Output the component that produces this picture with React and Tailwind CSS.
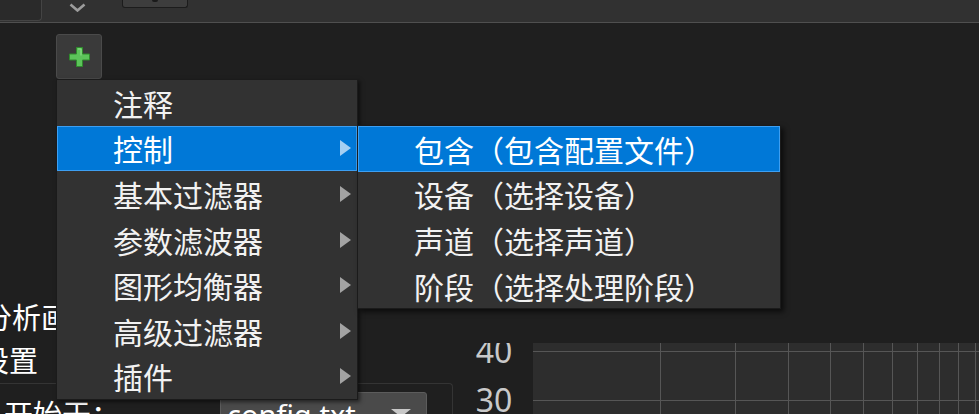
import React from "react";

const mainItems = [
    { label: "注释", sub: false },
    { label: "控制", sub: true, active: true },
    { label: "基本过滤器", sub: true },
    { label: "参数滤波器", sub: true },
    { label: "图形均衡器", sub: true },
    { label: "高级过滤器", sub: true },
    { label: "插件", sub: true },
];

const subItems = [
    { label: "包含（包含配置文件）", active: true },
    { label: "设备（选择设备）" },
    { label: "声道（选择声道）" },
    { label: "阶段（选择处理阶段）" },
];

const gridX = [127, 202, 255, 297, 330, 359, 384, 406, 425, 442];

const Arrow = ({ active }) => (
    <svg width="11" height="16" viewBox="0 0 11 16" className="shrink-0">
        <path d="M0 0 L11 8 L0 16 Z" fill={active ? "#a6cff2" : "#a3a3a3"} />
    </svg>
);

function MenuRow({ label, sub, active }) {
    return (
        <div
            className={`flex items-center h-[45.6px] border pl-[55px] pr-[5px] ${
                active ? "bg-[#0078d7] border-[#3d9ff2] text-white" : "border-transparent text-[#f2f2f2]"
            }`}
        >
            <span className="flex-1 text-[30px] leading-none whitespace-nowrap">{label}</span>
            {sub && <Arrow active={active} />}
        </div>
    );
}

export default function App() {
    return (
        <div
            className="relative w-[979px] h-[414px] overflow-hidden bg-[#1f1f1f]"
            style={{ fontFamily: '"Noto Sans", "Noto Sans CJK SC", sans-serif' }}
        >
            {/* top toolbar strip */}
            <div className="flex h-[23px] bg-[#313131] border-b border-[#4f4f4f]">
                <div className="w-[42px] h-[21px] bg-[#2a2a2a] border-r border-b border-[#444] rounded-br-[4px]" />
                <div className="ml-[27px] mt-[3px]">
                    <svg width="17" height="9" viewBox="0 0 17 9">
                        <path d="M1.5 1.5 L8.5 7.5 L15.5 1.5" stroke="#9c9c9c" strokeWidth="2.6" fill="none" />
                    </svg>
                </div>
                <div className="ml-[36px] w-[66px] h-[8px] bg-[#3d3d3d] border border-t-0 border-[#1c1c1c] rounded-b-[3px] flex justify-center">
                    <div className="w-[6px] h-[2px] bg-[#1a1a1a] rounded-b" />
                </div>
            </div>

            {/* add button */}
            <div className="pt-[11px] pl-[56px]">
                <div className="w-[46px] h-[45px] bg-[#3a3a3a] border border-[#4a4a4a] rounded-[3px] flex items-center justify-center">
                    <svg width="21" height="20" viewBox="0 0 21 20">
                        <path
                            d="M7.5 0.5 H13.5 V7 H20.5 V13 H13.5 V19.5 H7.5 V13 H0.5 V7 H7.5 Z"
                            fill="#5cc45a"
                            stroke="#2f8a2c"
                            strokeWidth="1"
                        />
                        <path d="M9 2 H12 V8.5" stroke="#8fe08a" strokeWidth="1" fill="none" />
                    </svg>
                </div>
            </div>

            {/* underlying panels */}
            <div className="flex mt-[217px]">
                <div className="w-[455px] shrink-0 text-[29px] text-white">
                    <div className="h-[43px] leading-[43px] -ml-[17px] whitespace-nowrap">分析画面</div>
                    <div className="h-[44px] leading-[44px] -ml-[20px] whitespace-nowrap">设置</div>
                    <div className="w-[453px] h-[40px] border-t border-r border-[#343434] rounded-tr-[4px]">
                        <div className="flex mt-[8px]">
                            <div className="h-[46px] leading-[46px] pl-[4px] w-[220px] whitespace-nowrap">开始于：</div>
                            <div className="w-[207px] h-[40px] bg-[#4a4a4a] border border-[#5c5c5c] rounded-t-[3px] flex items-start">
                                <span className="pl-[6px] text-[29px] leading-[44px] flex-1">config.txt</span>
                                <svg width="20" height="8" viewBox="0 0 20 8" className="mt-[16px] mr-[15px]">
                                    <path d="M0 0 H20 L10 8 Z" fill="#c8c8c8" />
                                </svg>
                            </div>
                        </div>
                    </div>
                </div>
                <div className="flex flex-1 mt-[47px] h-[71px]">
                    <div className="w-[78px] shrink-0 overflow-hidden text-[32px] text-[#c9c9c9] text-center">
                        <div className="-mt-[17px] leading-[49px]">40</div>
                        <div className="leading-[49px]">30</div>
                    </div>
                    <div className="flex-1 bg-[#2d2d2d]">
                        <svg width="446" height="71" viewBox="0 0 446 71">
                            <line x1="0" y1="8.5" x2="446" y2="8.5" stroke="#565656" />
                            <line x1="0" y1="57.5" x2="446" y2="57.5" stroke="#565656" />
                            {gridX.map((x) => (
                                <line key={x} x1={x + 0.5} y1="0" x2={x + 0.5} y2="71" stroke="#565656" />
                            ))}
                        </svg>
                    </div>
                </div>
            </div>

            {/* context menu */}
            <div
                className="absolute left-[56px] top-[79px] w-[302px] bg-[#323232] border border-[#1b1b1b] shadow-[2px_2px_4px_rgba(0,0,0,0.55)]"
                style={{ fontFamily: '"Noto Sans CJK SC", sans-serif' }}
            >
                {mainItems.map((it) => (
                    <MenuRow key={it.label} {...it} />
                ))}
            </div>

            {/* submenu */}
            <div
                className="absolute left-[357px] top-[125px] w-[424px] bg-[#323232] border border-[#1b1b1b] shadow-[3px_3px_5px_rgba(0,0,0,0.6)]"
                style={{ fontFamily: '"Noto Sans CJK SC", sans-serif' }}
            >
                {subItems.map((it) => (
                    <MenuRow key={it.label} {...it} />
                ))}
            </div>
        </div>
    );
}
